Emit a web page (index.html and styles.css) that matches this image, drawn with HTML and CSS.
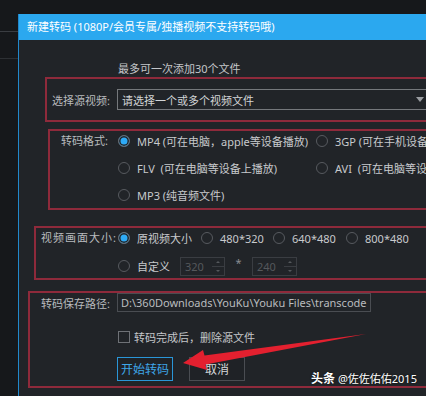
FILE: index.html
```html
<!DOCTYPE html>
<html lang="zh">
<head>
<meta charset="utf-8">
<title>新建转码</title>
<link rel="stylesheet" href="styles.css">
</head>
<body>
<div class="screen">
  <div class="side">
    <div class="side-line"></div>
    <div class="side-line l2"></div>
  </div>
  <div class="dialog">
    <div class="titlebar">新建转码 (1080P/会员专属/独播视频不支持转码哦)</div>
    <div class="hint">最多可一次添加30个文件</div>

    <section class="box box-src">
      <span class="label">选择源视频:</span>
      <div class="select"><span>请选择一个或多个视频文件</span><i class="caret"></i></div>
    </section>

    <section class="box box-fmt">
      <span class="label">转码格式:</span>
      <span class="opt"><i class="radio on"></i>MP4 (可在电脑，apple等设备播放)</span>
      <span class="opt"><i class="radio"></i>3GP (可在手机设备上播放)</span>
      <span class="opt"><i class="radio"></i>FLV&nbsp; (可在电脑等设备上播放)</span>
      <span class="opt"><i class="radio"></i>AVI&nbsp; (可在电脑等设备上播放)</span>
      <span class="opt"><i class="radio"></i>MP3 (纯音频文件)</span>
    </section>

    <section class="box box-size">
      <span class="label">视频画面大小:</span>
      <div class="size-row">
        <span class="opt w1"><i class="radio on"></i>原视频大小</span>
        <span class="opt w2"><i class="radio"></i>480*320</span>
        <span class="opt w3"><i class="radio"></i>640*480</span>
        <span class="opt"><i class="radio"></i>800*480</span>
      </div>
      <div class="size-custom">
        <span class="opt wc"><i class="radio"></i>自定义</span>
        <div class="spin"><span class="spin-val">320</span><span class="spin-btns"><i class="up"></i><i class="mid"></i><i class="down"></i></span></div>
        <span class="times">*</span>
        <div class="spin"><span class="spin-val">240</span><span class="spin-btns"><i class="up"></i><i class="mid"></i><i class="down"></i></span></div>
      </div>
    </section>

    <section class="box box-path">
      <div class="path-row">
        <span class="label">转码保存路径:</span>
        <div class="path">D:\360Downloads\YouKu\Youku Files\transcode</div>
      </div>
      <div class="check-row"><i class="checkbox"></i>转码完成后，删除源文件</div>
      <div class="btn-row">
        <button class="btn primary">开始转码</button>
        <button class="btn">取消</button>
      </div>
    </section>
  </div>

  <svg class="arrow" width="426" height="396" viewBox="0 0 426 396">
    <polygon points="183,363 203,350 204.5,355.5 366,334 205.5,364.5 207,370" fill="#e3202f"/>
  </svg>
  <div class="watermark"><b>头条</b> @佐佐佑佑2015</div>
</div>
</body>
</html>
```

FILE: styles.css
```css
* { box-sizing: border-box; margin: 0; padding: 0; }

html, body {
  width: 426px;
  height: 396px;
  overflow: hidden;
  background: #16181b;
}

body {
  font-family: "Noto Sans", "Noto Sans CJK SC", sans-serif;
  font-size: 11px;
  color: #c4c6c9;
}

i { font-style: normal; display: block; }

.screen {
  position: relative;
  display: flex;
  width: 426px;
  height: 396px;
  overflow: hidden;
}

.side {
  width: 18px;
  flex: none;
  padding-top: 31px;
}

.side-line { height: 1px; background: #3a3d42; }
.side-line.l2 { margin-top: 26px; background: #2d3034; }

.dialog {
  flex: none;
  width: 600px;
  margin-top: 14px;
  background: #212428;
  border-left: 1px solid #2188cc;
}

.titlebar {
  height: 26px;
  line-height: 26px;
  padding-left: 8px;
  background: #2ba8ef;
  color: #ffffff;
  white-space: nowrap;
}

.hint {
  margin-top: 22px;
  padding-left: 99px;
  height: 14px;
  line-height: 14px;
  color: #c4c6c9;
}

.box {
  width: 520px;
  border: 2px solid #8e2a3b;
}

.label { color: #b8bbbe; white-space: nowrap; }

/* source */
.box-src {
  margin: 1px 0 0 26px;
  height: 45px;
  display: flex;
  align-items: center;
  padding-left: 5px;
}
.box-src .label { width: 65px; flex: none; }

.select {
  width: 320px;
  height: 21px;
  flex: none;
  border: 1px solid #75787c;
  display: flex;
  align-items: center;
  justify-content: space-between;
  padding: 0 12px 0 4px;
  color: #d2d4d6;
}

.caret {
  width: 0;
  height: 0;
  border-left: 4px solid transparent;
  border-right: 4px solid transparent;
  border-top: 5px solid #9a9da1;
}

/* format */
.box-fmt {
  margin: 7px 0 0 29px;
  display: grid;
  grid-template-columns: 68px 198px auto;
  grid-auto-rows: 20px;
  row-gap: 7px;
  padding-bottom: 3px;
}
.box-fmt .label {
  grid-row: 1 / span 3;
  text-align: right;
  padding-right: 10px;
  line-height: 20px;
}

.opt {
  display: flex;
  align-items: center;
  white-space: nowrap;
  color: #c8cacd;
}

.radio {
  width: 12px;
  height: 12px;
  flex: none;
  border-radius: 50%;
  border: 1px solid #575a5f;
  margin-right: 7px;
}
.radio.on {
  background: #2eaaf6;
  border-color: #686b70;
  box-shadow: inset 0 0 0 1.5px #212428;
}

/* size */
.box-size {
  margin: 16px 0 0 15px;
  display: grid;
  grid-template-columns: 82px auto;
  grid-template-rows: 20px 20px;
  row-gap: 8px;
  padding-bottom: 2px;
}
.box-size .label {
  padding-left: 5px;
  line-height: 20px;
  letter-spacing: 1px;
}
.size-row { display: flex; align-items: center; }
.w1 { width: 83px; }
.w2 { width: 72px; }
.w3 { width: 73px; }

.size-custom {
  grid-column: 2;
  display: flex;
  align-items: center;
}
.wc { width: 62px; }

.spin {
  width: 45px;
  height: 19px;
  flex: none;
  display: flex;
  border: 1px solid #3a3d42;
  color: #55585c;
}
.spin-val { flex: 1; padding-left: 4px; line-height: 17px; }
.spin-btns {
  width: 12px;
  display: flex;
  flex-direction: column;
  align-items: center;
  justify-content: center;
  gap: 3px;
}
.spin-btns .up {
  width: 0; height: 0;
  border-left: 2px solid transparent;
  border-right: 2px solid transparent;
  border-bottom: 2px solid #55585c;
}
.spin-btns .down {
  width: 0; height: 0;
  border-left: 2px solid transparent;
  border-right: 2px solid transparent;
  border-top: 2px solid #55585c;
}
.spin-btns .mid { width: 12px; height: 1px; background: #3a3d42; }

.times {
  width: 27px;
  text-align: center;
  color: #8a8d91;
  line-height: 12px;
  margin-top: -6px;
}

/* path */
.box-path {
  margin: 11px 0 0 9px;
  padding-bottom: 5px;
}
.path-row { display: flex; align-items: center; height: 19px; }
.path-row .label { width: 87px; flex: none; padding-left: 11px; }
.path {
  width: 254px;
  height: 19px;
  flex: none;
  border: 1px solid #4a4d52;
  padding-left: 3px;
  line-height: 17px;
  color: #b9bcbf;
  white-space: nowrap;
  overflow: hidden;
}

.check-row {
  margin-top: 18px;
  height: 14px;
  display: flex;
  align-items: center;
  padding-left: 88px;
  color: #c4c6c9;
}
.checkbox {
  width: 12px;
  height: 12px;
  border: 1px solid #6e7176;
  margin-right: 4px;
}

.btn-row {
  margin-top: 13px;
  display: flex;
  gap: 16px;
  padding-left: 87px;
}
.btn {
  width: 56px;
  height: 24px;
  font-family: inherit;
  font-size: 12px;
  background: #1f2226;
  border: 1px solid #4a4d52;
  color: #d6d8da;
}
.btn.primary {
  border-color: #2a96d8;
  color: #3ea6e8;
}

/* overlays */
.arrow {
  position: absolute;
  left: 0;
  top: 0;
  pointer-events: none;
}

.watermark {
  position: absolute;
  left: 311px;
  top: 371px;
  color: #ffffff;
  font-size: 11px;
  line-height: 16px;
  white-space: nowrap;
  text-shadow: 0 0 2px rgba(0, 0, 0, 0.7);
}
.watermark b { font-size: 12px; }
```
